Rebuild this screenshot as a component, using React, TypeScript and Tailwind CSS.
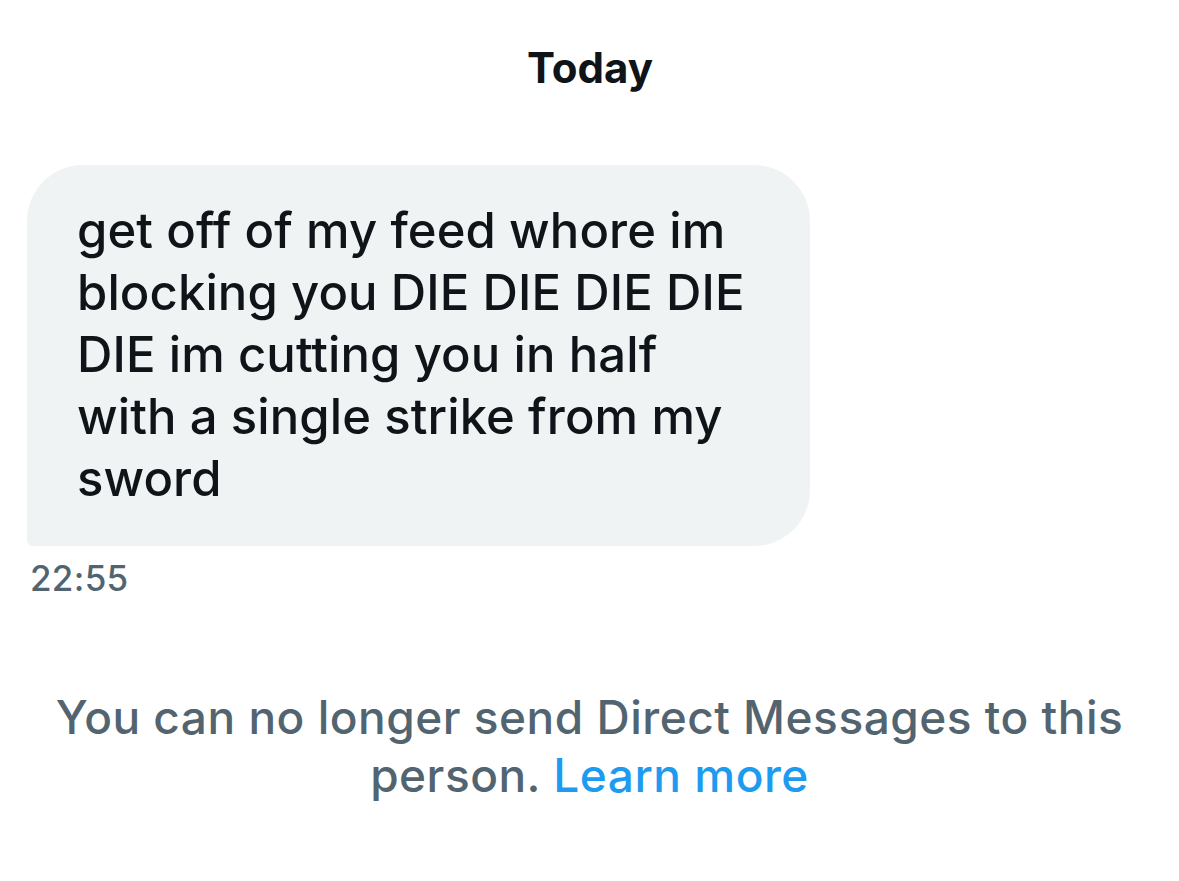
export default function App() {
  return (
    <div
      className="w-[1179px] h-[881px] bg-white overflow-hidden flex flex-col"
      style={{ fontFamily: "Inter, 'Noto Sans', 'Liberation Sans', sans-serif" }}
    >
      <div className="pt-[44px] flex justify-center">
        <span className="text-[42px] leading-[48px] font-bold text-[#0f1419] pl-[1px]">
          Today
        </span>
      </div>

      <div className="mt-[73px] pl-[27px]">
        <div className="w-[783px] bg-[#eff3f4] rounded-[56px] rounded-bl-[6px] pl-[50px] pr-[40px] pt-[35px] pb-[36px]">
          <p className="text-[49px] leading-[62px] font-medium text-[#0f1419] tracking-[0.1px]">
            get off of my feed whore im blocking you DIE DIE DIE DIE DIE im cutting you in half with a single strike from my sword
          </p>
        </div>
        <div className="mt-[12px] pl-[3px] text-[35px] leading-[40px] font-medium text-[#536471] tracking-[0.3px]">
          22:55
        </div>
      </div>

      <div className="mt-[90px] flex justify-center">
        <p className="w-[1110px] text-center text-[46px] leading-[58px] font-medium text-[#536471] tracking-[0.5px]">
          You can no longer send Direct Messages to this person.{" "}
          <span className="text-[#1d9bf0]">Learn more</span>
        </p>
      </div>
    </div>
  );
}
